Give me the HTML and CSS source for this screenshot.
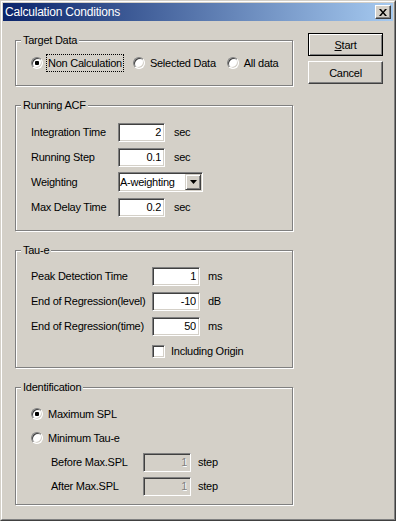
FILE: index.html
```html
<!DOCTYPE html>
<html>
<head>
    <title>Calculation Conditions</title>
    <link rel="stylesheet" href="styles.css">
</head>
<body>
    <div class="window">
        <div class="frame">
            <div class="titlebar">
                <span class="title">Calculation Conditions</span>
                <span class="close-btn">
                    <svg width="8" height="7" viewBox="0 0 8 7"><path d="M0 0h2l2 2.5L6 0h2L5 3.5 8 7H6L4 4.5 2 7H0l3-3.5z" fill="#000"/></svg>
                </span>
            </div>

            <div class="dialog">
                <div class="groups">
                    <!-- Target Data -->
                    <fieldset class="group">
                        <legend>Target Data</legend>
                        <div class="group-body target">
                            <label class="option"><span class="radio checked"></span><span class="caption focus">Non Calculation</span></label>
                            <label class="option"><span class="radio"></span><span class="caption">Selected Data</span></label>
                            <label class="option"><span class="radio"></span><span class="caption">All data</span></label>
                        </div>
                    </fieldset>

                    <!-- Running ACF -->
                    <fieldset class="group">
                        <legend>Running ACF</legend>
                        <div class="group-body acf">
                            <div class="row">
                                <span class="label">Integration Time</span>
                                <input type="text" class="field" value="2">
                                <span class="unit">sec</span>
                            </div>
                            <div class="row">
                                <span class="label">Running Step</span>
                                <input type="text" class="field" value="0.1">
                                <span class="unit">sec</span>
                            </div>
                            <div class="row">
                                <span class="label">Weighting</span>
                                <div class="combo">
                                    <span class="combo-text">A-weighting</span>
                                    <span class="combo-btn">
                                        <svg width="7" height="4" viewBox="0 0 7 4"><path d="M0 0h7L3.5 4z" fill="#000"/></svg>
                                    </span>
                                </div>
                            </div>
                            <div class="row">
                                <span class="label">Max Delay Time</span>
                                <input type="text" class="field" value="0.2">
                                <span class="unit">sec</span>
                            </div>
                        </div>
                    </fieldset>

                    <!-- Tau-e -->
                    <fieldset class="group">
                        <legend>Tau-e</legend>
                        <div class="group-body tau">
                            <div class="row">
                                <span class="label">Peak Detection Time</span>
                                <input type="text" class="field" value="1">
                                <span class="unit">ms</span>
                            </div>
                            <div class="row">
                                <span class="label">End of Regression(level)</span>
                                <input type="text" class="field" value="-10">
                                <span class="unit">dB</span>
                            </div>
                            <div class="row">
                                <span class="label">End of Regression(time)</span>
                                <input type="text" class="field" value="50">
                                <span class="unit">ms</span>
                            </div>
                            <div class="row check-row">
                                <span class="checkbox"></span>
                                <span class="caption">Including Origin</span>
                            </div>
                        </div>
                    </fieldset>

                    <!-- Identification -->
                    <fieldset class="group">
                        <legend>Identification</legend>
                        <div class="group-body ident">
                            <label class="row option"><span class="radio checked"></span><span class="caption">Maximum SPL</span></label>
                            <label class="row option"><span class="radio"></span><span class="caption">Minimum Tau-e</span></label>
                            <div class="row sub">
                                <span class="label">Before Max.SPL</span>
                                <input type="text" class="field" value="1" disabled>
                                <span class="unit">step</span>
                            </div>
                            <div class="row sub">
                                <span class="label">After Max.SPL</span>
                                <input type="text" class="field" value="1" disabled>
                                <span class="unit">step</span>
                            </div>
                        </div>
                    </fieldset>
                </div>

                <div class="buttons">
                    <button class="btn default"><u>S</u>tart</button>
                    <button class="btn">Cancel</button>
                </div>
            </div>
        </div>
    </div>
</body>
</html>
```

FILE: styles.css
```css
* {
    box-sizing: border-box;
}

html, body {
    margin: 0;
    padding: 0;
}

body {
    font-family: "Liberation Sans", Arial, sans-serif;
    font-size: 11px;
    letter-spacing: -0.25px;
    color: #000;
    background-color: #d4d0c8;
}

/* window chrome */
.window {
    width: 396px;
    height: 521px;
    border: 1px solid;
    border-color: #d4d0c8 #404040 #404040 #d4d0c8;
}

.frame {
    height: 100%;
    padding: 1px;
    border: 1px solid;
    border-color: #fff #808080 #808080 #fff;
    background-color: #d4d0c8;
}

.titlebar {
    height: 18px;
    display: flex;
    align-items: center;
    justify-content: space-between;
    padding: 0 2px;
    background: linear-gradient(to right, #0a246a, #a6caf0);
    color: #fff;
}

.title {
    font-size: 12px;
    letter-spacing: -0.2px;
}

.close-btn {
    width: 16px;
    height: 14px;
    display: flex;
    align-items: center;
    justify-content: center;
    background-color: #d4d0c8;
    border: 1px solid;
    border-color: #fff #404040 #404040 #fff;
    box-shadow: inset -1px -1px 0 #808080;
}

/* dialog layout */
.dialog {
    display: flex;
    gap: 15px;
    padding: 12px 10px 0 12px;
}

.groups {
    width: 278px;
    display: flex;
    flex-direction: column;
    gap: 13px;
    padding-top: 1px;
}

.group {
    margin: 0;
    padding: 0;
    min-width: 0;
    border: 1px solid #808080;
    box-shadow: inset 1px 1px 0 #fff, 1px 1px 0 #fff;
}

.group legend {
    margin-left: 5px;
    padding: 0 2px;
    line-height: 13px;
    background-color: #d4d0c8;
}

.group-body {
    display: flex;
    flex-direction: column;
    padding-left: 15px;
}

.target {
    flex-direction: row;
    gap: 9px;
    padding-top: 7px;
    padding-bottom: 13px;
}

.acf {
    gap: 5px;
    padding-top: 10px;
    padding-bottom: 13px;
}

.tau {
    gap: 5px;
    padding-top: 9px;
    padding-bottom: 6px;
}

.ident {
    gap: 4px;
    padding-top: 10px;
    padding-bottom: 8px;
}

.row {
    height: 20px;
    display: flex;
    align-items: center;
}

.acf .label {
    width: 87px;
}

.tau .label {
    width: 121px;
}

.ident .sub {
    padding-left: 20px;
}

.ident .label {
    width: 92px;
}

.unit {
    margin-left: 9px;
}

.tau .unit {
    margin-left: 8px;
}

.ident .unit {
    margin-left: 7px;
}

/* radio + checkbox */
.option {
    height: 18px;
    display: flex;
    align-items: center;
}

.ident .option {
    height: 20px;
}

.radio {
    width: 12px;
    height: 12px;
    border-radius: 50%;
    border: 1px solid;
    border-color: #808080 #fff #fff #808080;
    box-shadow: inset 1px 1px 0 #404040, inset -1px -1px 0 #d4d0c8;
    background-color: #fff;
    margin-right: 3px;
}

.radio.checked {
    background: radial-gradient(circle, #000 2px, #fff 2.5px);
}

.caption {
    padding: 0 1px;
    border: 1px solid transparent;
    line-height: 16px;
}

.focus {
    border: 1px dotted #000;
}

.check-row {
    padding-left: 121px;
}

.checkbox {
    width: 13px;
    height: 13px;
    border: 1px solid;
    border-color: #808080 #fff #fff #808080;
    box-shadow: inset 1px 1px 0 #404040, inset -1px -1px 0 #d4d0c8;
    background-color: #fff;
    margin-right: 4px;
}

/* edit boxes */
.field {
    width: 47px;
    height: 19px;
    margin: 0;
    padding: 0 3px;
    font: inherit;
    letter-spacing: inherit;
    text-align: right;
    color: #000;
    background-color: #fff;
    border: 1px solid;
    border-color: #808080 #fff #fff #808080;
    box-shadow: inset 1px 1px 0 #404040, inset -1px -1px 0 #d4d0c8;
    outline: none;
}

.tau .field,
.ident .field {
    width: 48px;
}

.field:disabled {
    background-color: #d4d0c8;
    color: #808080;
    text-shadow: 1px 1px 0 #fff;
}

/* combo box */
.combo {
    width: 85px;
    height: 20px;
    display: flex;
    align-items: center;
    padding: 1px;
    border: 1px solid;
    border-color: #808080 #fff #fff #808080;
    box-shadow: inset 1px 1px 0 #404040, inset -1px -1px 0 #d4d0c8;
    background-color: #fff;
}

.combo-text {
    flex: 1;
}

.combo-btn {
    width: 16px;
    height: 16px;
    display: flex;
    align-items: center;
    justify-content: center;
    background-color: #d4d0c8;
    border: 1px solid;
    border-color: #d4d0c8 #404040 #404040 #d4d0c8;
    box-shadow: inset 1px 1px 0 #fff, inset -1px -1px 0 #808080;
}

/* push buttons */
.buttons {
    display: flex;
    flex-direction: column;
    gap: 5px;
}

.btn {
    width: 75px;
    height: 23px;
    padding: 0;
    font: inherit;
    letter-spacing: inherit;
    color: #000;
    background-color: #d4d0c8;
    border: 1px solid;
    border-color: #fff #404040 #404040 #fff;
    box-shadow: inset -1px -1px 0 #808080, inset 1px 1px 0 #d4d0c8;
}

.btn.default {
    border-color: #000;
    box-shadow: inset 1px 1px 0 #fff, inset -1px -1px 0 #808080;
}
```
